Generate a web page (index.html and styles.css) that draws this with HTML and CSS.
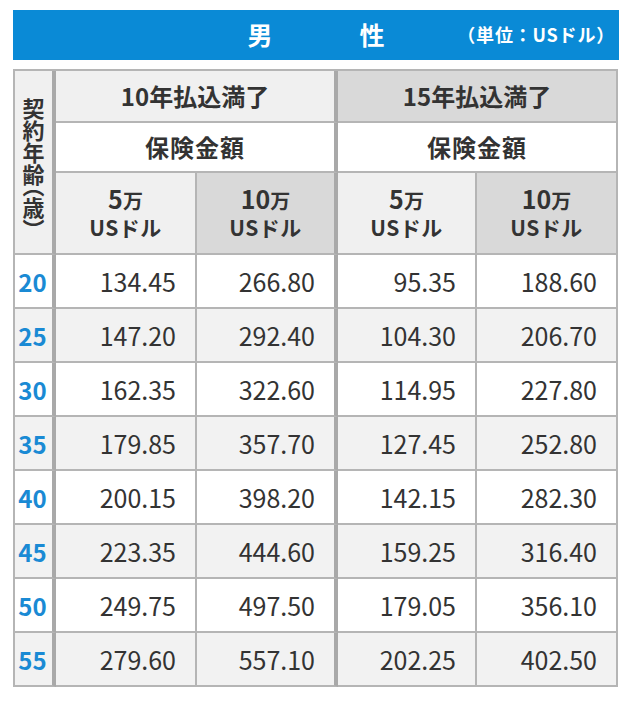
FILE: index.html
```html
<!DOCTYPE html>
<html lang="ja">
<head>
<meta charset="utf-8">
<title>男性 保険料表</title>
<link rel="stylesheet" href="styles.css">
</head>
<body>
<div class="wrap">
  <div class="title-bar">
    <div class="title"><span>男</span><span>性</span></div>
    <div class="unit">（単位：USドル）</div>
  </div>
  <div class="grid">
    <div class="cell age-head"><span class="vtext">契約年齢<span class="paren">（</span>歳<span class="paren">）</span></span></div>
    <div class="cell plan plan1">10年払込満了</div>
    <div class="cell plan plan2 thin-right">15年払込満了</div>
    <div class="cell amount thick-right">保険金額</div>
    <div class="cell amount thin-right">保険金額</div>
    <div class="cell sub light"><span class="line"><span class="big">5</span>万</span><span class="line">USドル</span></div>
    <div class="cell sub dark thick-right"><span class="line"><span class="big">10</span>万</span><span class="line">USドル</span></div>
    <div class="cell sub light"><span class="line"><span class="big">5</span>万</span><span class="line">USドル</span></div>
    <div class="cell sub dark thin-right"><span class="line"><span class="big">10</span>万</span><span class="line">USドル</span></div>

    <div class="cell age">20</div><div class="cell num">134.45</div><div class="cell num thick-right">266.80</div><div class="cell num">95.35</div><div class="cell num thin-right">188.60</div>
    <div class="cell age alt">25</div><div class="cell num alt">147.20</div><div class="cell num alt thick-right">292.40</div><div class="cell num alt">104.30</div><div class="cell num alt thin-right">206.70</div>
    <div class="cell age">30</div><div class="cell num">162.35</div><div class="cell num thick-right">322.60</div><div class="cell num">114.95</div><div class="cell num thin-right">227.80</div>
    <div class="cell age alt">35</div><div class="cell num alt">179.85</div><div class="cell num alt thick-right">357.70</div><div class="cell num alt">127.45</div><div class="cell num alt thin-right">252.80</div>
    <div class="cell age">40</div><div class="cell num">200.15</div><div class="cell num thick-right">398.20</div><div class="cell num">142.15</div><div class="cell num thin-right">282.30</div>
    <div class="cell age alt">45</div><div class="cell num alt">223.35</div><div class="cell num alt thick-right">444.60</div><div class="cell num alt">159.25</div><div class="cell num alt thin-right">316.40</div>
    <div class="cell age">50</div><div class="cell num">249.75</div><div class="cell num thick-right">497.50</div><div class="cell num">179.05</div><div class="cell num thin-right">356.10</div>
    <div class="cell age alt">55</div><div class="cell num alt">279.60</div><div class="cell num alt thick-right">557.10</div><div class="cell num alt">202.25</div><div class="cell num alt thin-right">402.50</div>
  </div>
</div>
</body>
</html>
```
FILE: styles.css
```css
html, body {
  margin: 0;
  padding: 0;
  background: #ffffff;
}
body {
  font-family: "Noto Sans CJK JP", "Noto Sans", sans-serif;
  color: #333333;
}
.wrap {
  padding: 10px 0 0 13px;
  width: 606px;
}
.title-bar {
  height: 50px;
  background: #0a8ad6;
  color: #ffffff;
  position: relative;
  display: flex;
  align-items: center;
  justify-content: center;
}
.title {
  display: flex;
  gap: 87px;
  font-size: 25px;
  font-weight: 700;
  line-height: 1;
  margin-top: -2px;
}
.unit {
  position: absolute;
  right: 4px;
  top: 0;
  bottom: 0;
  display: flex;
  align-items: center;
  font-size: 18px;
  font-weight: 700;
  letter-spacing: 0.8px;
  margin-top: -2px;
}
.grid {
  margin-top: 9px;
  width: 605px;
  display: grid;
  grid-template-columns: 41px 141px 141px 139px 141px;
  grid-template-rows: 52px 50px 82px repeat(8, 54px);
  border-top: 2px solid #b5b5b5;
  border-left: 2px solid #b5b5b5;
  box-sizing: border-box;
}
.cell {
  box-sizing: border-box;
  border-right: 2px solid #b5b5b5;
  border-bottom: 2px solid #b5b5b5;
  display: flex;
  align-items: center;
  justify-content: center;
  background: #ffffff;
}
.thick-right {
  border-right: 4px solid #a9a9a9;
}
.thin-right {
  border-right: 2px solid #b5b5b5;
}
.age-head {
  grid-row: 1 / span 3;
  grid-column: 1;
  border-right: 4px solid #a9a9a9;
  background: #f0f0f0;
}
.vtext {
  writing-mode: vertical-rl;
  font-size: 22px;
  font-weight: 700;
  line-height: 1;
  letter-spacing: 0;
  padding-top: 4px;
}
.paren {
  font-feature-settings: "vhal" 1;
}
.plan {
  grid-column: span 2;
  font-size: 24px;
  font-weight: 700;
  padding-bottom: 2px;
}
.plan1 {
  background: #f0f0f0;
  border-right: 4px solid #a9a9a9;
}
.plan2 {
  background: #d9d9d9;
}
.amount {
  grid-column: span 2;
  font-size: 24px;
  font-weight: 700;
  letter-spacing: 1px;
  padding-bottom: 2px;
}
.sub {
  flex-direction: column;
  text-align: center;
  font-size: 20px;
  font-weight: 700;
  padding-bottom: 2px;
}
.sub .line {
  display: block;
  line-height: 26px;
  white-space: nowrap;
}
.sub .line + .line {
  font-size: 21px;
  letter-spacing: 0.5px;
}
.sub .big {
  font-size: 25px;
}
.light {
  background: #f0f0f0;
}
.dark {
  background: #d9d9d9;
}
.age {
  color: #1a8ad4;
  font-size: 24px;
  font-weight: 700;
  border-right: 4px solid #a9a9a9;
  padding-right: 2px;
}
.num {
  justify-content: flex-end;
  padding-right: 19px;
  font-size: 25px;
  font-weight: 400;
  color: #333333;
}
.alt {
  background: #f2f2f2;
}
```
